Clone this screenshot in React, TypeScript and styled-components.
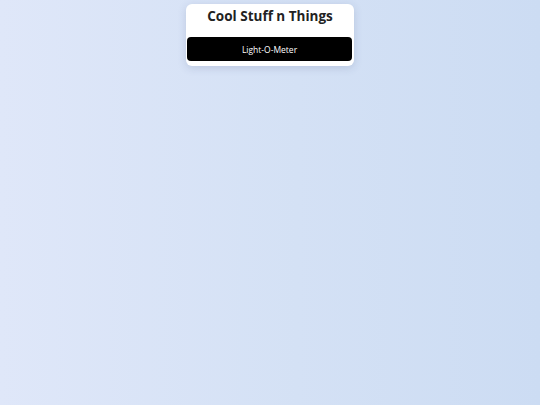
import styled, { createGlobalStyle } from "styled-components";

const GlobalStyle = createGlobalStyle`
  html, body {
    margin: 0;
    padding: 0;
  }
  body {
    font-family: "Open Sans", "Liberation Sans", sans-serif;
    background: linear-gradient(90deg, #dfe7f9 0%, #d4e1f5 55%, #ccdcf3 100%);
    min-height: 100vh;
  }
`;

const Page = styled.div`
  min-height: 100vh;
  display: flex;
  flex-direction: column;
  align-items: center;
  padding-top: 4px;
  box-sizing: border-box;
`;

const Card = styled.div`
  width: 168px;
  background: #ffffff;
  border-radius: 6px;
  box-shadow: 0 2px 8px rgba(60, 80, 120, 0.18);
  padding: 2px 1px 5px;
  box-sizing: border-box;
  display: flex;
  flex-direction: column;
  align-items: stretch;
`;

const Title = styled.h1`
  margin: 0;
  font-size: 13.5px;
  line-height: 20px;
  font-weight: 700;
  color: #222222;
  text-align: center;
  padding-bottom: 11px;
`;

const MenuButton = styled.button`
  height: 24px;
  border: none;
  border-radius: 4px;
  background: #000000;
  color: #ffffff;
  font-family: "Open Sans", "Liberation Sans", sans-serif;
  font-size: 8.5px;
  cursor: pointer;
  margin-right: 1px;
`;

export default function App() {
  return (
    <>
      <GlobalStyle />
      <Page>
        <Card>
          <Title>Cool Stuff n Things</Title>
          <MenuButton>Light-O-Meter</MenuButton>
        </Card>
      </Page>
    </>
  );
}
